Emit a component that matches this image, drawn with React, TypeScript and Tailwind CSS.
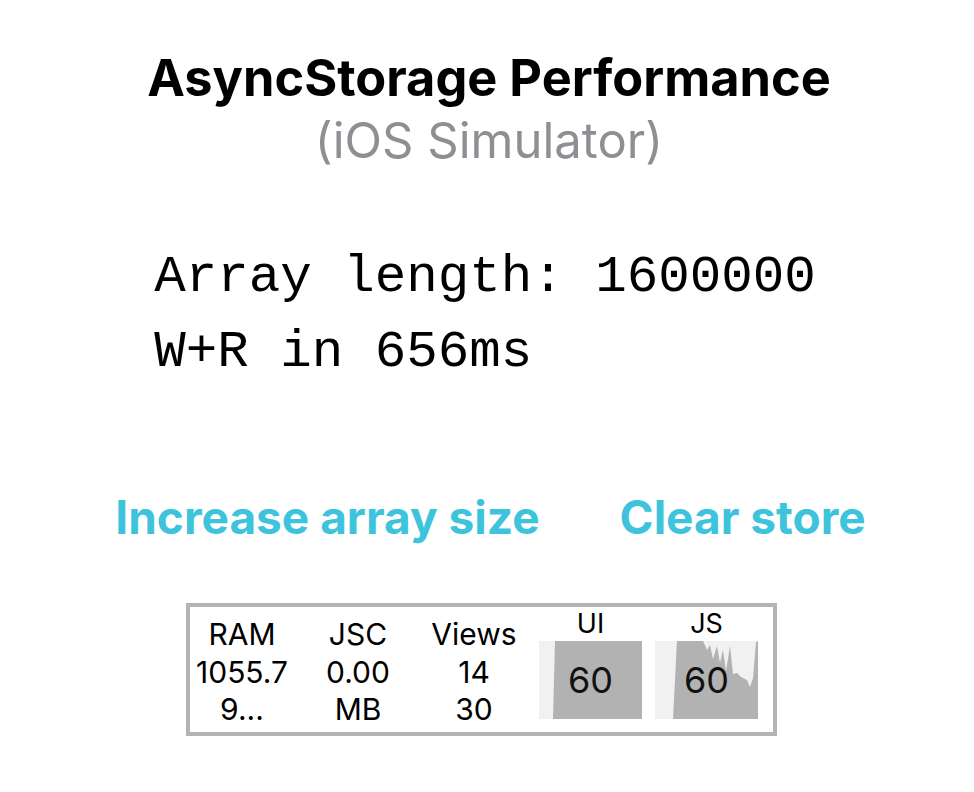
import React from 'react';

const jsPoints =
  '18,78 22,0 48,0 52,9 55,4 58,18 62,5 65,22 68,9 71,30 75,5 78,33 82,32 86,36 92,39 95,46 98,37 101,1 103,0 103,78';

const Graph: React.FC<{ label: string; points: string }> = ({ label, points }) => (
  <div className="flex w-[103px] flex-col items-center">
    <div className="h-[34px] text-[27px] leading-[34px] text-black">{label}</div>
    <div className="relative h-[78px] w-[103px]">
      <svg width="103" height="78" viewBox="0 0 103 78" className="block">
        <rect x="0" y="0" width="103" height="78" fill="#f1f1f1" />
        <polygon points={points} fill="#b2b2b2" />
      </svg>
      <span className="absolute inset-0 flex items-center justify-center text-[36px] leading-none text-[#111]">
        60
      </span>
    </div>
  </div>
);

const StatColumn: React.FC<{ lines: string[] }> = ({ lines }) => (
  <div className="flex w-[104px] flex-col items-center pt-[9px]">
    {lines.map((l) => (
      <div key={l} className="h-[37.5px] whitespace-nowrap text-[30px] leading-[37.5px] text-black">
        {l}
      </div>
    ))}
  </div>
);

export default function App() {
  return (
    <div
      className="flex min-h-[792px] w-full flex-col items-center bg-white"
      style={{ fontFamily: 'Inter, "Liberation Sans", sans-serif' }}
    >
      {/* header */}
      <h1 className="ml-[4px] mt-[48px] text-[50.5px] font-bold leading-[60px] text-black">
        AsyncStorage Performance
      </h1>
      <p className="ml-[4px] mt-[4px] text-[49px] leading-[58px] text-[#8e8e93]">(iOS Simulator)</p>

      {/* result */}
      <div
        className="mr-[4px] mt-[70px] text-[52.5px] leading-[75px] text-black"
        style={{ fontFamily: '"Courier New", "Liberation Mono", monospace' }}
      >
        <div className="whitespace-pre">Array length: 1600000</div>
        <div className="whitespace-pre">W+R in 656ms</div>
      </div>

      {/* actions */}
      <div className="ml-[7px] mt-[100px] flex gap-[80px] text-[46px] font-bold leading-[54px] text-[#3ec3dc]">
        <button type="button">Increase array size</button>
        <button type="button">Clear store</button>
      </div>

      {/* perf monitor */}
      <div className="mr-[11px] mt-[59px] flex h-[133px] w-[591px] gap-[12px] border-[4px] border-[#b4b4b4]">
        <StatColumn lines={['RAM', '1055.7', '9...']} />
        <StatColumn lines={['JSC', '0.00', 'MB']} />
        <StatColumn lines={['Views', '14', '30']} />
        <div className="ml-[1px] flex gap-[13px]">
          <Graph label="UI" points="14,78 16,0 103,0 103,78" />
          <Graph label="JS" points={jsPoints} />
        </div>
      </div>
    </div>
  );
}
